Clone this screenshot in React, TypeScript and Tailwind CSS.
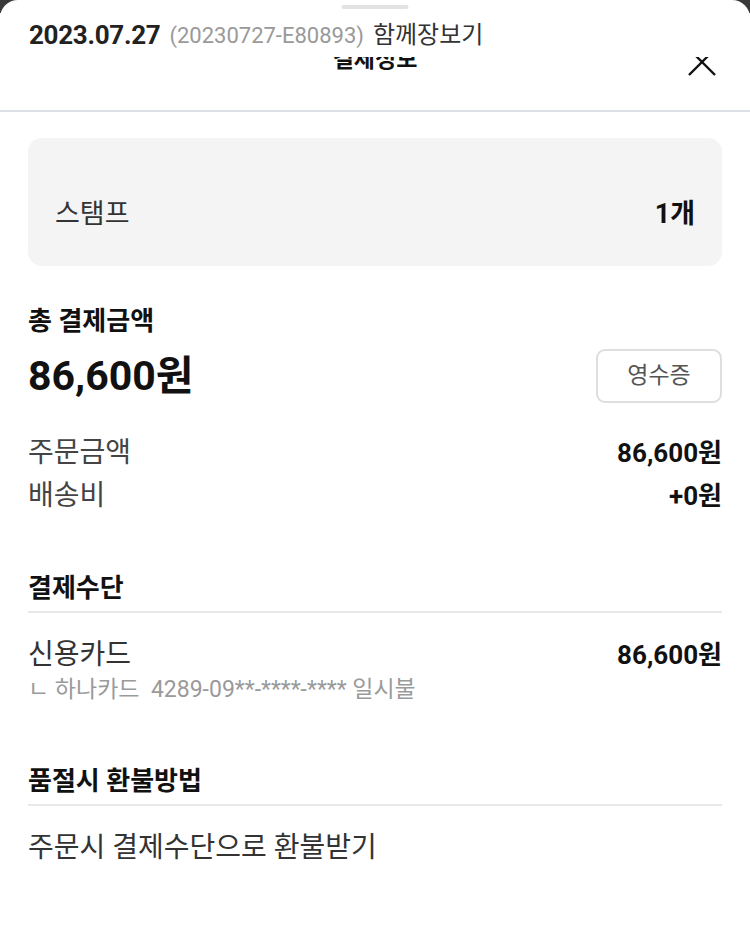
export default function App() {
  return (
    <div className="min-h-screen bg-[#3a3a3a] font-[Roboto,'Noto_Sans_CJK_KR',sans-serif]">
      <div className="relative min-h-[941px] rounded-t-[18px] bg-white">
        {/* header */}
        <div className="relative flex h-[112px] items-center justify-center border-b-2 border-[#dde1e6] pt-[10px]">
          <div className="absolute left-1/2 top-[5px] h-[4px] w-[67px] -translate-x-1/2 rounded-full bg-[#e2e2e2]" />
          <h2 className="text-[23px] font-bold text-[#111]">결제정보</h2>
          <button className="absolute right-[33px] top-[48px] h-[28px] w-[30px]">
            <svg viewBox="0 0 30 28" className="h-[28px] w-[30px]" fill="none" stroke="#111" strokeWidth="2.4">
              <line x1="2" y1="1" x2="28" y2="27" />
              <line x1="28" y1="1" x2="2" y2="27" />
            </svg>
          </button>
        </div>

        {/* order line over header */}
        <div className="absolute inset-x-0 top-[13px] flex h-[44px] items-center bg-white pl-[29px]">
          <span className="text-[26px] font-bold tracking-[-0.3px] text-[#222]">2023.07.27</span>
          <span className="ml-[9px] text-[22px] text-[#999]">(20230727-E80893)</span>
          <span className="ml-[9px] text-[24px] text-[#333]">함께장보기</span>
        </div>

        <div className="px-[28px] pb-[40px]">
          <div className="mt-[26px] flex h-[128px] items-center justify-between rounded-[14px] bg-[#f4f4f4] px-[27px] pt-[24px]">
            <span className="text-[27px] text-[#333]">스탬프</span>
            <span className="text-[27px] font-bold text-[#111]">1개</span>
          </div>

          <h3 className="mt-[40px] text-[26px] font-bold leading-[30px] text-[#111]">총 결제금액</h3>
          <div className="mt-[13px] flex h-[54px] items-center justify-between">
            <span className="text-[41px] font-bold leading-none text-[#111]">86,600원</span>
            <button className="h-[54px] w-[126px] rounded-[9px] border-2 border-[#dedede] text-[23px] text-[#555]">
              영수증
            </button>
          </div>

          <div className="mt-[33px] flex justify-between leading-[34px]">
            <span className="text-[28px] text-[#444]">주문금액</span>
            <span className="text-[26px] font-bold text-[#111]">86,600원</span>
          </div>
          <div className="mt-[9px] flex justify-between leading-[34px]">
            <span className="text-[28px] text-[#444]">배송비</span>
            <span className="text-[26px] font-bold text-[#111]">+0원</span>
          </div>

          <h3 className="mt-[60px] text-[26px] font-bold leading-[30px] text-[#111]">결제수단</h3>
          <div className="mt-[8px] border-b-2 border-[#e8e8e8]" />
          <div className="mt-[25px] flex justify-between leading-[34px]">
            <span className="text-[28px] text-[#333]">신용카드</span>
            <span className="text-[26px] font-bold text-[#111]">86,600원</span>
          </div>
          <p className="mt-[3px] text-[23px] leading-[30px] text-[#9a9a9a]">
            ㄴ 하나카드&nbsp;&nbsp;4289-09**-****-**** 일시불
          </p>

          <h3 className="mt-[61px] text-[26px] font-bold leading-[30px] text-[#111]">품절시 환불방법</h3>
          <div className="mt-[8px] border-b-2 border-[#e8e8e8]" />
          <p className="mt-[25px] text-[28px] leading-[34px] text-[#333]">주문시 결제수단으로 환불받기</p>
        </div>
      </div>
    </div>
  );
}
